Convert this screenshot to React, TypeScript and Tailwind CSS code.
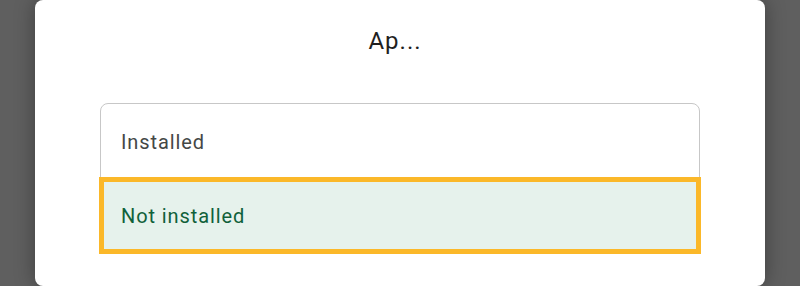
export default function App() {
  return (
    <div className="h-[286px] w-[800px] overflow-hidden bg-[#5f5f5f] font-['Roboto','Noto_Sans',sans-serif]">
      <div className="ml-[35px] flex h-[286px] w-[730px] flex-col rounded-[8px] bg-white shadow-[0_0_20px_rgba(0,0,0,0.35)]">
        <h1 className="pt-[26px] pr-[10px] text-center text-[24px] leading-[30px] font-normal tracking-[1px] text-[#1f1f1f]">
          Ap...
        </h1>

        {/* options */}
        <div className="mx-[65px] mt-[47px] rounded-[8px] border border-[#c7c7c7]">
          <div className="flex h-[75px] items-center px-[20px] text-[20px] tracking-[0.9px] text-[#444746]">
            Installed
          </div>
          <div className="flex h-[73px] items-center bg-[#e6f2ec] px-[20px] text-[20px] tracking-[0.9px] text-[#10613a] outline-[5px] -outline-offset-[3px] outline-solid outline-[#fbb829]">
            Not installed
          </div>
        </div>
      </div>
    </div>
  );
}
